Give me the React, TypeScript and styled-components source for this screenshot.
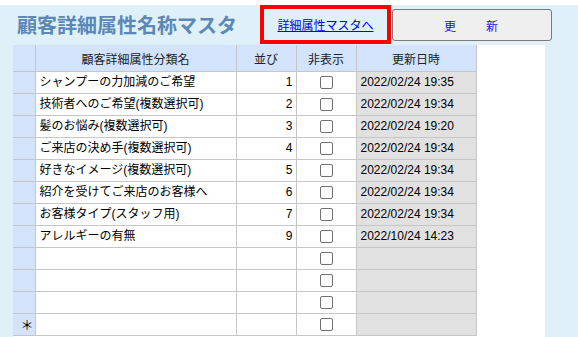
import styled, { createGlobalStyle } from "styled-components";

const GlobalStyle = createGlobalStyle`
  html, body {
    margin: 0;
    padding: 0;
    background: #dff0f8;
  }
  body {
    font-family: "Liberation Sans", "Noto Sans CJK JP", sans-serif;
    font-size: 12px;
    color: #000;
  }
`;

const colors = {
  page: "#dff0f8",
  head: "#d3e3fb",
  grid: "#c6c6c6",
  locked: "#e1e1e1",
  title: "#5b88b6",
  link: "#0000ee",
};

const Page = styled.div`
  border-top: 5px solid #fff;
  height: 332px;
  overflow: hidden;
  background: ${colors.page};
`;

const TopBar = styled.div`
  display: flex;
  align-items: flex-start;
  height: 40px;
`;

const Title = styled.h1`
  margin: 0;
  width: 243px;
  padding-left: 17px;
  height: 40px;
  line-height: 40px;
  font-size: 20px;
  font-weight: bold;
  color: ${colors.title};
  font-family: "Noto Sans CJK JP", sans-serif;
`;

const LinkBox = styled.div`
  box-sizing: border-box;
  width: 131px;
  height: 39px;
  border: 4px solid #f00;
  display: flex;
  align-items: center;
  justify-content: center;
`;

const MasterLink = styled.a`
  color: ${colors.link};
  text-decoration: underline;
  font-size: 12px;
  font-family: "Noto Sans CJK JP", sans-serif;
  cursor: pointer;
`;

const UpdateButton = styled.button`
  box-sizing: border-box;
  margin: 4px 0 0 1px;
  width: 160px;
  height: 32px;
  background: #efefef;
  border: 1px solid #7a7a7a;
  border-radius: 3px;
  color: #1818d8;
  font-size: 12px;
  letter-spacing: 2px;
  font-family: "Noto Sans CJK JP", sans-serif;
  white-space: pre;
`;

const SubForm = styled.div`
  margin-left: 13px;
  width: 532px;
  height: 292px;
  background: #fff;
`;

const Grid = styled.table`
  border-collapse: collapse;
  table-layout: fixed;
  width: 463px;
`;

const HeadCell = styled.th`
  height: 26px;
  padding: 0;
  background: ${colors.head};
  border: 1px solid ${colors.grid};
  border-top: none;
  border-left: none;
  font-weight: normal;
  color: #222;
  font-size: 12px;
  font-family: "Noto Sans CJK JP", sans-serif;
`;

const Cell = styled.td<{ $align?: "left" | "right" | "center"; $locked?: boolean }>`
  height: 21px;
  padding: 0 ${(p) => (p.$align === "right" ? "3px" : "4px")};
  border: 1px solid ${colors.grid};
  border-top: none;
  border-left: none;
  text-align: ${(p) => p.$align ?? "left"};
  background: ${(p) => (p.$locked ? colors.locked : "#fff")};
  white-space: nowrap;
  overflow: hidden;
  font-size: 12px;
  line-height: 21px;
`;

const SelectorCell = styled.td`
  height: 21px;
  padding: 0 1px 0 0;
  background: ${colors.head};
  border: 1px solid ${colors.grid};
  border-top: none;
  border-left: none;
  text-align: right;
  font-size: 13px;
  line-height: 21px;
  font-family: "Noto Sans CJK JP", sans-serif;
`;

const Check = styled.span`
  display: inline-block;
  box-sizing: border-box;
  width: 13px;
  height: 13px;
  border: 1px solid #707070;
  border-radius: 2px;
  background: #fff;
  vertical-align: middle;
`;

const rows = [
  { name: "シャンプーの力加減のご希望", order: 1, date: "2022/02/24 19:35" },
  { name: "技術者へのご希望(複数選択可)", order: 2, date: "2022/02/24 19:34" },
  { name: "髪のお悩み(複数選択可)", order: 3, date: "2022/02/24 19:20" },
  { name: "ご来店の決め手(複数選択可)", order: 4, date: "2022/02/24 19:34" },
  { name: "好きなイメージ(複数選択可)", order: 5, date: "2022/02/24 19:34" },
  { name: "紹介を受けてご来店のお客様へ", order: 6, date: "2022/02/24 19:34" },
  { name: "お客様タイプ(スタッフ用)", order: 7, date: "2022/02/24 19:34" },
  { name: "アレルギーの有無", order: 9, date: "2022/10/24 14:23" },
  null,
  null,
  null,
  "new",
] as const;

const App = () => (
  <>
    <GlobalStyle />
    <Page>
      <TopBar>
        <Title>顧客詳細属性名称マスタ</Title>
        <LinkBox>
          <MasterLink>詳細属性マスタへ</MasterLink>
        </LinkBox>
        <UpdateButton>{"更　　新"}</UpdateButton>
      </TopBar>
      <SubForm>
        <Grid>
          <colgroup>
            <col style={{ width: 22 }} />
            <col style={{ width: 201 }} />
            <col style={{ width: 60 }} />
            <col style={{ width: 60 }} />
            <col style={{ width: 120 }} />
          </colgroup>
          <thead>
            <tr>
              <HeadCell />
              <HeadCell>顧客詳細属性分類名</HeadCell>
              <HeadCell>並び</HeadCell>
              <HeadCell>非表示</HeadCell>
              <HeadCell>更新日時</HeadCell>
            </tr>
          </thead>
          <tbody>
            {rows.map((r, i) => {
              const data = r && r !== "new" ? r : null;
              return (
                <tr key={i}>
                  <SelectorCell>{r === "new" ? "＊" : ""}</SelectorCell>
                  <Cell>{data?.name}</Cell>
                  <Cell $align="right">{data?.order}</Cell>
                  <Cell $align="center">
                    <Check />
                  </Cell>
                  <Cell $locked>{data?.date}</Cell>
                </tr>
              );
            })}
          </tbody>
        </Grid>
      </SubForm>
    </Page>
  </>
);

export default App;
